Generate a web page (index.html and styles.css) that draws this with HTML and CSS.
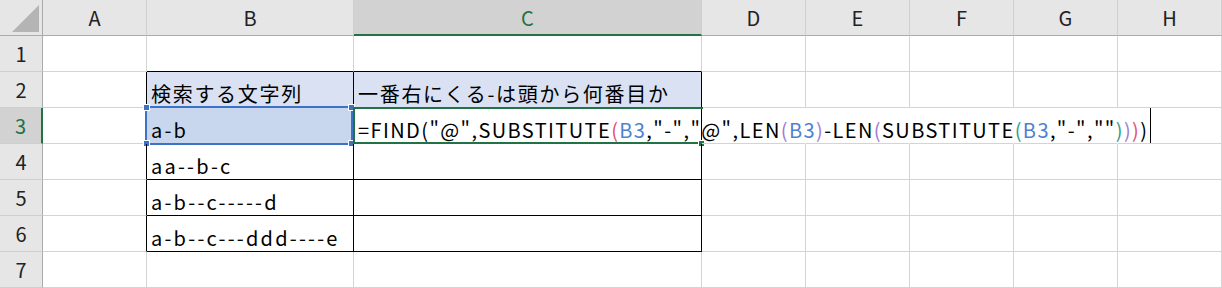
FILE: index.html
```html
<!DOCTYPE html>
<html lang="ja">
<head>
    <meta charset="UTF-8">
    <title>Sheet1</title>
    <link rel="stylesheet" href="styles.css">
</head>
<body>

    <div class="sheet">
        <!-- column headers -->
        <div class="corner">
            <svg width="43" height="36" viewBox="0 0 43 36"><polygon points="12,32 39,32 39,5" fill="#b4b4b4"/></svg>
        </div>
        <div class="ch">A</div>
        <div class="ch">B</div>
        <div class="ch ch-sel">C</div>
        <div class="ch">D</div>
        <div class="ch">E</div>
        <div class="ch">F</div>
        <div class="ch">G</div>
        <div class="ch">H</div>

        <!-- row 1 -->
        <div class="rh">1</div>
        <div class="cell"></div>
        <div class="cell edge-b"></div>
        <div class="cell edge-b"></div>
        <div class="cell"></div>
        <div class="cell"></div>
        <div class="cell"></div>
        <div class="cell"></div>
        <div class="cell"></div>

        <!-- row 2 -->
        <div class="rh">2</div>
        <div class="cell edge-r"></div>
        <div class="cell tbl head">検索する文字列</div>
        <div class="cell tbl head">一番右にくる-は頭から何番目か</div>
        <div class="cell"></div>
        <div class="cell"></div>
        <div class="cell"></div>
        <div class="cell"></div>
        <div class="cell"></div>

        <!-- row 3 -->
        <div class="rh rh-sel">3</div>
        <div class="cell edge-r"></div>
        <div class="cell tbl ref data">
            a-b
            <div class="ref-box">
                <span class="handle tl"></span>
                <span class="handle tr"></span>
                <span class="handle bl"></span>
                <span class="handle br"></span>
            </div>
        </div>
        <div class="cell tbl active">
            <div class="active-box"><span class="fill-handle"></span></div>
            <span class="formula">=FIND("@",SUBSTITUTE<span class="p1">(</span><span class="rf">B3</span>,"-","@",LEN<span class="p2">(</span><span class="rf">B3</span><span class="p2">)</span>-LEN<span class="p2">(</span>SUBSTITUTE<span class="p3">(</span><span class="rf">B3</span>,"-",""<span class="p3">)</span><span class="p2">)</span><span class="p1">)</span>)</span>
            <span class="caret"></span>
        </div>
        <div class="cell no-r"></div>
        <div class="cell no-r"></div>
        <div class="cell no-r"></div>
        <div class="cell no-r"></div>
        <div class="cell"></div>

        <!-- row 4 -->
        <div class="rh">4</div>
        <div class="cell edge-r"></div>
        <div class="cell tbl data">aa--b-c</div>
        <div class="cell tbl"></div>
        <div class="cell"></div>
        <div class="cell"></div>
        <div class="cell"></div>
        <div class="cell"></div>
        <div class="cell"></div>

        <!-- row 5 -->
        <div class="rh">5</div>
        <div class="cell edge-r"></div>
        <div class="cell tbl data">a-b--c-----d</div>
        <div class="cell tbl"></div>
        <div class="cell"></div>
        <div class="cell"></div>
        <div class="cell"></div>
        <div class="cell"></div>
        <div class="cell"></div>

        <!-- row 6 -->
        <div class="rh">6</div>
        <div class="cell edge-r"></div>
        <div class="cell tbl data">a-b--c---ddd----e</div>
        <div class="cell tbl"></div>
        <div class="cell"></div>
        <div class="cell"></div>
        <div class="cell"></div>
        <div class="cell"></div>
        <div class="cell"></div>

        <!-- row 7 -->
        <div class="rh">7</div>
        <div class="cell"></div>
        <div class="cell"></div>
        <div class="cell"></div>
        <div class="cell"></div>
        <div class="cell"></div>
        <div class="cell"></div>
        <div class="cell"></div>
        <div class="cell"></div>
    </div>

</body>
</html>
```

FILE: styles.css
```css
body {
    margin: 0;
    background: #fff;
    font-family: "Noto Sans CJK JP", "Noto Sans", sans-serif;
    color: #000;
}

.sheet {
    display: grid;
    grid-template-columns: 43px 104px 207px 348px 104px 104px 104px 104px 104px;
    grid-template-rows: 36px repeat(7, 36px);
    width: 1222px;
    overflow: hidden;
}

.sheet > div {
    box-sizing: border-box;
}

/* headers */
.corner {
    background: #e6e6e6;
    border-right: 1px solid #ababab;
    border-bottom: 1px solid #ababab;
}

.corner svg {
    display: block;
}

.ch {
    background: #e6e6e6;
    border-right: 1px solid #cfcfcf;
    border-bottom: 1px solid #ababab;
    display: flex;
    align-items: center;
    justify-content: center;
    font-size: 20px;
    color: #222;
}

.ch-sel {
    background: #d2d2d2;
    color: #217346;
    border-bottom: 2px solid #217346;
}

.rh {
    background: #e6e6e6;
    border-right: 1px solid #ababab;
    border-bottom: 1px solid #cfcfcf;
    display: flex;
    align-items: center;
    justify-content: center;
    font-size: 20px;
    color: #222;
}

.rh-sel {
    background: #d2d2d2;
    color: #217346;
    border-right: 2px solid #217346;
}

/* cells */
.cell {
    position: relative;
    border-right: 1px solid #d4d4d4;
    border-bottom: 1px solid #d4d4d4;
    display: flex;
    align-items: flex-end;
    padding: 0 4px 1px 4px;
    font-size: 20px;
    line-height: 24px;
    letter-spacing: 1.7px;
    white-space: nowrap;
}

.cell.data {
    letter-spacing: 2.2px;
}

.edge-r {
    border-right-color: #000;
}

.edge-b {
    border-bottom-color: #000;
}

.tbl {
    border-right-color: #000;
    border-bottom-color: #000;
}

.head {
    background: #d9e1f2;
}

.no-r {
    border-right-color: transparent;
}

/* reference highlight on B3 */
.ref {
    background: #c8d6ee;
}

.ref-box {
    position: absolute;
    top: -2px;
    left: -2px;
    right: 0;
    bottom: -2px;
    border: 2px solid #3c73c8;
}

.handle {
    position: absolute;
    width: 5px;
    height: 5px;
    background: #3c73c8;
    border: 1px solid #fff;
}

.handle.tl { top: -4px; left: -4px; }
.handle.tr { top: -4px; right: -4px; }
.handle.bl { bottom: -4px; left: -4px; }
.handle.br { bottom: -4px; right: -4px; }

/* active cell C3 (editing) */
.active {
    overflow: visible;
}

.active-box {
    position: absolute;
    top: -1px;
    left: -1px;
    right: -2px;
    bottom: -1px;
    border: 2px solid #217346;
    border-right: none;
}

.fill-handle {
    position: absolute;
    right: -2px;
    bottom: -5px;
    width: 5px;
    height: 5px;
    background: #217346;
    border: 1px solid #fff;
}

.formula {
    flex: none;
    letter-spacing: 1.4px;
}

.rf { color: #4f81d1; }
.p1 { color: #e0507c; }
.p2 { color: #a07ad6; }
.p3 { color: #2e9e86; }

.caret {
    flex: none;
    align-self: stretch;
    width: 1px;
    margin: 0 0 -1px 2px;
    background: #000;
}
```
